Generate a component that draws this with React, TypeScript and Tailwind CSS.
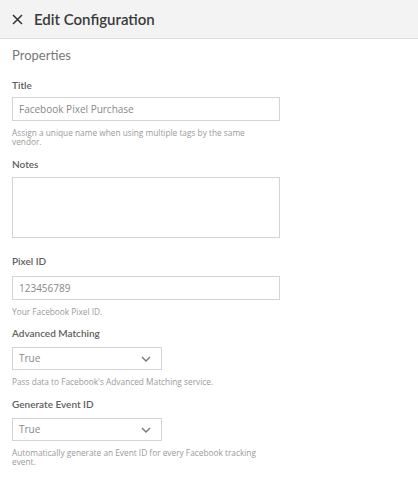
import React from 'react';

const font = { fontFamily: 'Lato, "Open Sans", Arial, sans-serif' };

const Label = ({ children }: { children: React.ReactNode }) => (
  <div className="text-[10px] leading-[12px] font-semibold text-[#606060]">{children}</div>
);

const Help = ({ children }: { children: React.ReactNode }) => (
  <p className="mt-[7px] text-[8.3px] leading-[9px] text-[#9a9a9a] w-[256px] font-['Open_Sans',sans-serif]">
    {children}
  </p>
);

const Chevron = () => (
  <svg width="10" height="6" viewBox="0 0 10 6" className="text-[#777]">
    <path d="M1 1l4 4 4-4" fill="none" stroke="currentColor" strokeWidth="1.4" />
  </svg>
);

const Select = ({ value }: { value: string }) => (
  <div className="mt-[8px] w-[150px] h-[23px] border border-[#d4d4d4] flex items-center justify-between pl-[6px] pr-[10px] text-[10px] text-[#888] font-['Open_Sans',sans-serif]">
    <span>{value}</span>
    <Chevron />
  </div>
);

const inputCls =
  "block w-[268px] h-[24px] border border-[#d4d4d4] px-[6px] text-[10px] text-[#888] outline-none font-['Open_Sans',sans-serif]";

export default function App() {
  return (
    <div className="w-[418px] h-[479px] bg-white" style={font}>
      {/* header */}
      <div className="h-[39px] bg-[#f3f3f3] border-b border-[#dcdcdc] flex items-center pl-[12px] gap-[11px]">
        <svg width="11" height="11" viewBox="0 0 11 11">
          <path d="M1 1l9 9M10 1l-9 9" stroke="#333" strokeWidth="1.5" />
        </svg>
        <span className="text-[15px] font-semibold text-[#3a3a3a]">Edit Configuration</span>
      </div>

      <div className="px-[12px]">
        <div className="mt-[8px] text-[13px] leading-[16px] text-[#777]">Properties</div>

        <div className="mt-[16px]">
          <Label>Title</Label>
          <input readOnly value="Facebook Pixel Purchase" className={`mt-[6px] ${inputCls}`} />
          <Help>Assign a unique name when using multiple tags by the same vendor.</Help>
        </div>

        <div className="mt-[12px]">
          <Label>Notes</Label>
          <textarea
            readOnly
            className="mt-[7px] block w-[268px] h-[61px] border border-[#d4d4d4] resize-none outline-none"
          />
        </div>

        <div className="mt-[17px]">
          <Label>Pixel ID</Label>
          <input readOnly value="123456789" className={`mt-[9px] ${inputCls}`} />
          <Help>Your Facebook Pixel ID.</Help>
        </div>

        <div className="mt-[11px]">
          <Label>Advanced Matching</Label>
          <Select value="True" />
          <Help>Pass data to Facebook's Advanced Matching service.</Help>
        </div>

        <div className="mt-[12px]">
          <Label>Generate Event ID</Label>
          <Select value="True" />
          <Help>Automatically generate an Event ID for every Facebook tracking event.</Help>
        </div>
      </div>
    </div>
  );
}
